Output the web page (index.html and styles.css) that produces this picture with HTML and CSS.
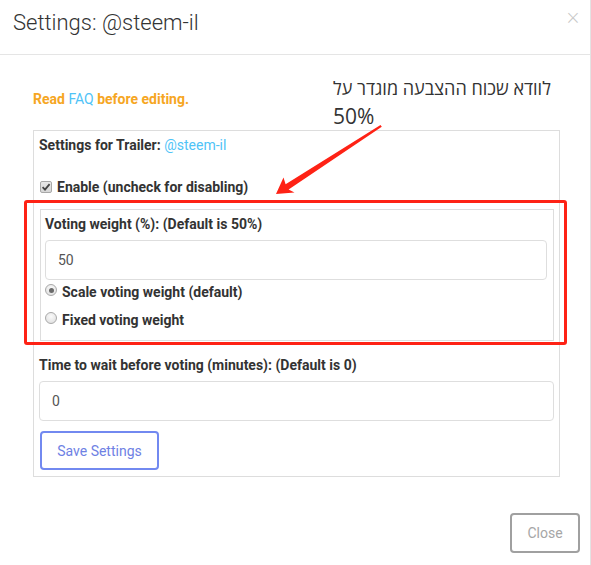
FILE: index.html
```html
<!DOCTYPE html>
<html>
<head>
<meta charset="utf-8">
<link rel="stylesheet" href="styles.css">
</head>
<body>
<div class="modal">
  <div class="modal-header">
    <h4 class="modal-title">Settings: @steem-il</h4>
    <span class="close">×</span>
  </div>
  <div class="modal-body">
    <p class="faq">Read <a class="link">FAQ</a> before editing.</p>
    <div class="panel">
      <div class="line bold">Settings for Trailer: <a class="link">@steem-il</a></div>
      <label class="line bold check-row"><span class="checkbox"><svg viewBox="0 0 12 12" width="12" height="12"><path d="M2.6 6.2 L5 8.6 L9.6 3.2" fill="none" stroke="#444" stroke-width="1.8"/></svg></span>Enable (uncheck for disabling)</label>
      <div class="weight-box">
        <div class="line bold">Voting weight (%): (Default is 50%)</div>
        <div class="input">50</div>
        <label class="line bold radio-row first"><span class="radio checked"></span>Scale voting weight (default)</label>
        <label class="line bold radio-row second"><span class="radio"></span>Fixed voting weight</label>
      </div>
      <div class="line bold time-label">Time to wait before voting (minutes): (Default is 0)</div>
      <div class="input">0</div>
      <button class="btn-save">Save Settings</button>
    </div>
  </div>
  <div class="modal-footer">
    <button class="btn-close">Close</button>
  </div>
</div>
<div class="annotation" dir="rtl">
  <div class="heb">לוודא שכוח ההצבעה מוגדר על</div>
  <div class="pct">50%</div>
</div>
<div class="red-box"></div>
<svg class="arrow" width="591" height="565" viewBox="0 0 591 565">
  <polygon points="276,194 283.5,177.5 285.6,184.2 380.5,125 381.8,126.8 288.6,189.4 294.5,192.6" fill="#fe2215"/>
</svg>
</body>
</html>
```
FILE: styles.css
```css
* { box-sizing: border-box; }
html, body { margin: 0; padding: 0; background: #fff; }
body {
  font-family: Roboto, "Liberation Sans", sans-serif;
  font-size: 14px;
  color: #333;
  width: 591px;
  height: 565px;
  overflow: hidden;
  position: relative;
}
.modal {
  width: 591px;
  height: 565px;
  border-right: 1px solid #e3e3e3;
  display: flex;
  flex-direction: column;
}
.modal-header {
  height: 55px;
  border-bottom: 1px solid #e5e5e5;
  display: flex;
  justify-content: space-between;
  align-items: flex-start;
  padding: 0 9px 0 13px;
}
.modal-title {
  margin: 8px 0 0;
  font-size: 22px;
  font-weight: 300;
  line-height: 30px;
  color: #333;
}
.close {
  font-size: 19px;
  color: #c8c8c8;
  line-height: 20px;
  margin-top: 7px;
  font-family: "DejaVu Sans", sans-serif;
  font-weight: 300;
}
.modal-body {
  padding: 0 30px 0 33px;
}
.faq {
  margin: 34px 0 0;
  line-height: 20px;
  font-weight: 700;
  color: #f6a623;
}
.link { color: #4fc3f7; font-weight: 400; }
.panel {
  margin-top: 21px;
  border: 1px solid #dddddd;
  padding: 4px 5px 6px 5px;
  display: flex;
  flex-direction: column;
}
.line { line-height: 20px; display: flex; align-items: center; }
.bold { font-weight: 700; }
.panel > .line:first-child { display: block; }
.check-row { margin-top: 22px; }
.checkbox {
  width: 12px;
  height: 12px;
  margin: 0 5px 0 1px;
  border: 1px solid #a8a8a8;
  border-radius: 2px;
  background: linear-gradient(#e8e8e8, #d6d6d6);
  display: inline-flex;
}
.checkbox svg { margin: -1px; }
.weight-box {
  margin: 12px 0 0 1px;
  border: 1px solid #dddddd;
  padding: 4px 6px 10px 4px;
  display: flex;
  flex-direction: column;
}
.input {
  margin-top: 6px;
  height: 40px;
  border: 1px solid #dedede;
  border-radius: 4px;
  padding-left: 12px;
  display: flex;
  align-items: center;
  color: #555;
  font-size: 14px;
}
.radio-row.first { margin-top: 2px; }
.radio-row.second { margin-top: 8px; }
.radio {
  width: 12px;
  height: 12px;
  border-radius: 50%;
  border: 1px solid #a9a9a9;
  background: radial-gradient(circle at 50% 35%, #fafafa, #dcdcdc);
  margin: 0 5px 0 0;
  position: relative;
  top: -2px;
}
.radio.checked::after {
  content: "";
  position: absolute;
  left: 2.5px;
  top: 2.5px;
  width: 5px;
  height: 5px;
  border-radius: 50%;
  background: #6a6a6a;
}
.time-label { margin-top: 14px; }
.btn-save {
  margin-top: 10px;
  align-self: flex-start;
  margin-left: 1px;
  width: 119px;
  height: 39px;
  border: 2px solid #7289f0;
  border-radius: 4px;
  background: #fff;
  color: #6e81e4;
  font-family: Roboto, "Liberation Sans", sans-serif;
  font-size: 14px;
  padding: 0;
}
.modal-footer {
  display: flex;
  justify-content: flex-end;
  padding: 36px 10px 0 0;
}
.btn-close {
  width: 70px;
  height: 40px;
  border: 2px solid #a0a0a0;
  border-radius: 4px;
  background: #fff;
  color: #a6a6a6;
  font-family: Roboto, "Liberation Sans", sans-serif;
  font-size: 14px;
  padding: 0;
}
.annotation {
  position: absolute;
  left: 333px;
  top: 74px;
  width: 222px;
  text-align: left;
  font-family: "Open Sans", "Liberation Sans", sans-serif;
  color: #333;
}
.heb { font-size: 18px; line-height: 28px; white-space: nowrap; }
.pct { font-size: 21px; line-height: 28px; direction: ltr; }
.red-box {
  position: absolute;
  left: 24px;
  top: 200px;
  width: 543px;
  height: 145px;
  border: 3px solid #fe2215;
  border-radius: 3px;
}
.arrow { position: absolute; left: 0; top: 0; pointer-events: none; }
```
